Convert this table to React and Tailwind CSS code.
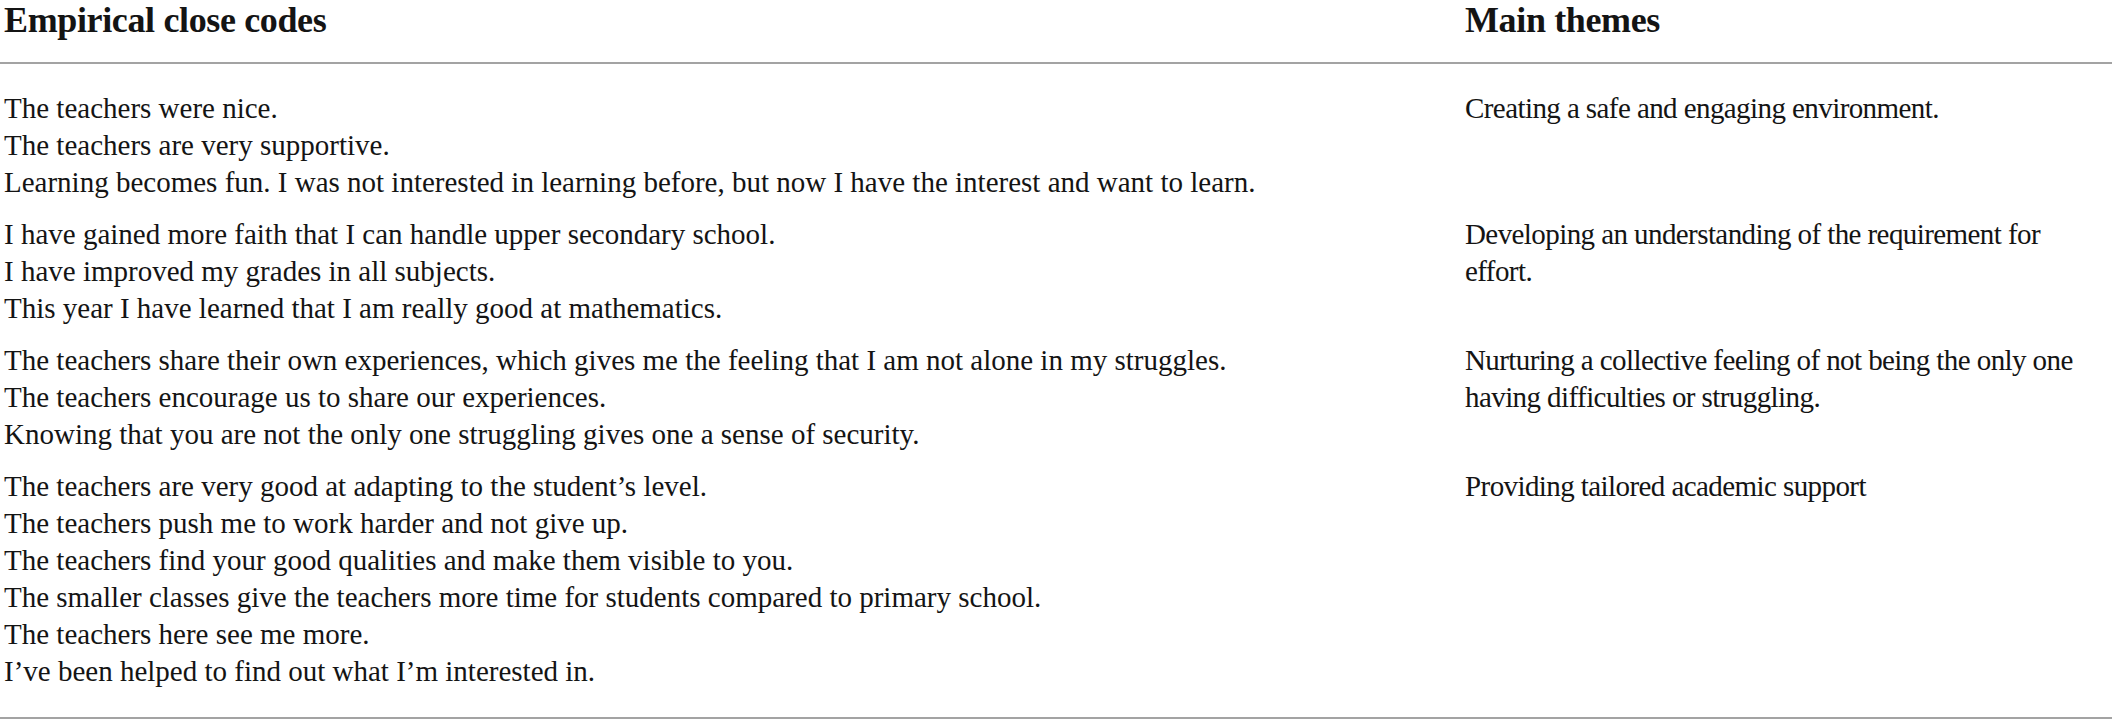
const rows = [
  {
    codes: [
      'The teachers were nice.',
      'The teachers are very supportive.',
      'Learning becomes fun. I was not interested in learning before, but now I have the interest and want to learn.',
    ],
    theme: 'Creating a safe and engaging environment.',
  },
  {
    codes: [
      'I have gained more faith that I can handle upper secondary school.',
      'I have improved my grades in all subjects.',
      'This year I have learned that I am really good at mathematics.',
    ],
    theme: 'Developing an understanding of the requirement for effort.',
  },
  {
    codes: [
      'The teachers share their own experiences, which gives me the feeling that I am not alone in my struggles.',
      'The teachers encourage us to share our experiences.',
      'Knowing that you are not the only one struggling gives one a sense of security.',
    ],
    theme: 'Nurturing a collective feeling of not being the only one having difficulties or struggling.',
  },
  {
    codes: [
      'The teachers are very good at adapting to the student\u2019s level.',
      'The teachers push me to work harder and not give up.',
      'The teachers find your good qualities and make them visible to you.',
      'The smaller classes give the teachers more time for students compared to primary school.',
      'The teachers here see me more.',
      'I\u2019ve been helped to find out what I\u2019m interested in.',
    ],
    theme: 'Providing tailored academic support',
  },
]

export default function App() {
  return (
    <div className="w-[2117px] min-h-[724px] bg-white text-[#141414] font-['Liberation_Serif',serif]">
      <div className="w-[2112px]">
        {/* header */}
        <div className="grid grid-cols-[1465px_1fr] pb-[22px] border-b-2 border-[#a3a3a3] text-[36px] leading-[40px] font-bold tracking-[-0.01em]">
          <div className="pl-[4px]">Empirical close codes</div>
          <div>Main themes</div>
        </div>

        {/* body */}
        <div className="pt-[26px] pb-[27px] border-b-2 border-[#a3a3a3] flex flex-col gap-[15px]">
          {rows.map((r, i) => (
            <div key={i} className="grid grid-cols-[1465px_1fr] text-[29px] leading-[37px]">
              <div className="pl-[4px]">
                {r.codes.map((c, j) => (
                  <p key={j}>{c}</p>
                ))}
              </div>
              <div className="pr-[10px] tracking-[-0.02em]">{r.theme}</div>
            </div>
          ))}
        </div>
      </div>
    </div>
  )
}
